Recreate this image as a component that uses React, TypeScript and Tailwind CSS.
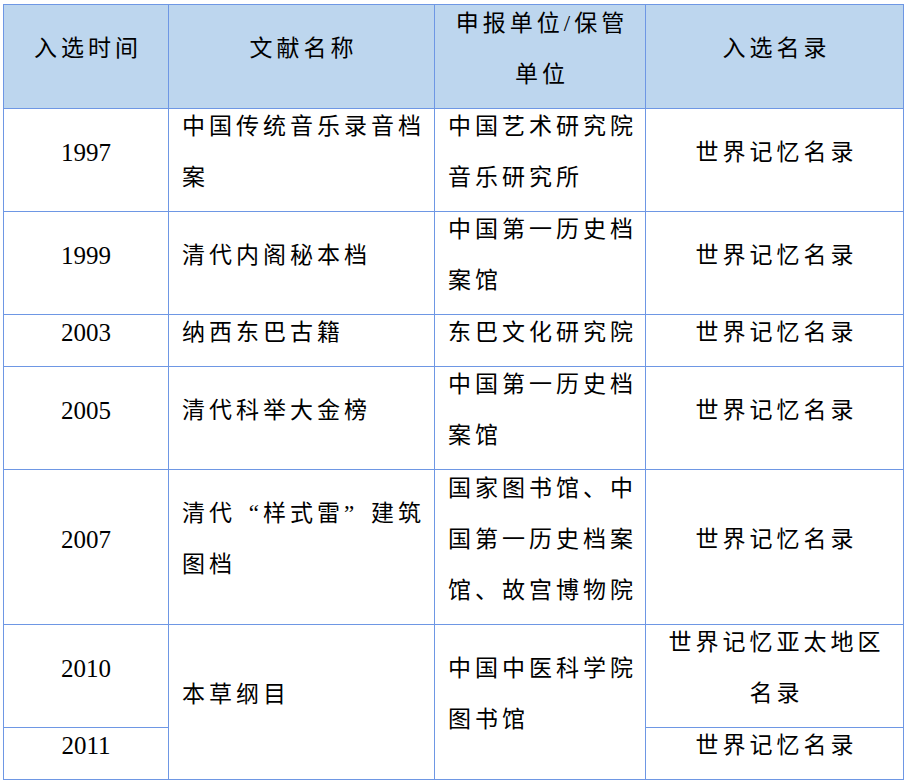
import React from "react";

const OpenQ = () => <span className="inline-block w-[27px] text-right">“</span>;
const CloseQ = () => <span className="inline-block w-[27px] text-left">”</span>;

const T = ({ children }: { children: React.ReactNode }) => (
  <span className="inline-block -translate-y-[8px]">{children}</span>
);

const cell = "border border-[#6e97e4] align-middle p-0";
const cjk = "[font-family:'Liberation_Serif','Noto_Sans_CJK_SC',serif] text-[23px] tracking-[4px] leading-[51px] text-black";
const num = "[font-family:'Liberation_Serif',serif] text-[25px] leading-[51px] text-black text-center";

const Year = ({ y }: { y: string }) => (
  <td className={`${cell} ${num}`}>
    <T>{y}</T>
  </td>
);

const Left = ({ lines, rowSpan }: { lines: React.ReactNode[]; rowSpan?: number }) => (
  <td rowSpan={rowSpan} className={`${cell} ${cjk} pl-[13px] text-left whitespace-nowrap`}>
    <T>
      {lines.map((l, i) => (
        <div key={i}>{l}</div>
      ))}
    </T>
  </td>
);

const Center = ({ lines }: { lines: React.ReactNode[] }) => (
  <td className={`${cell} ${cjk} text-center whitespace-nowrap`}>
    <T>
      {lines.map((l, i) => (
        <div key={i} className="pl-[4px]">{l}</div>
      ))}
    </T>
  </td>
);

export default function App() {
  return (
    <div className="bg-white w-[906px] h-[781px] pt-[4px] pl-[3px]">
      <table className="table-fixed border-collapse w-[900px]">
        <colgroup>
          <col className="w-[165px]" />
          <col className="w-[266px]" />
          <col className="w-[211px]" />
          <col className="w-[258px]" />
        </colgroup>
        <tbody>
          <tr className="h-[104px] bg-[#bdd6ee]">
            <Center lines={["入选时间"]} />
            <Center lines={["文献名称"]} />
            <Center lines={["申报单位/保管", "单位"]} />
            <Center lines={["入选名录"]} />
          </tr>
          <tr className="h-[103px]">
            <Year y="1997" />
            <Left lines={["中国传统音乐录音档", "案"]} />
            <Left lines={["中国艺术研究院", "音乐研究所"]} />
            <Center lines={["世界记忆名录"]} />
          </tr>
          <tr className="h-[103px]">
            <Year y="1999" />
            <Left lines={["清代内阁秘本档"]} />
            <Left lines={["中国第一历史档", "案馆"]} />
            <Center lines={["世界记忆名录"]} />
          </tr>
          <tr className="h-[52px]">
            <Year y="2003" />
            <Left lines={["纳西东巴古籍"]} />
            <Left lines={["东巴文化研究院"]} />
            <Center lines={["世界记忆名录"]} />
          </tr>
          <tr className="h-[103px]">
            <Year y="2005" />
            <Left lines={["清代科举大金榜"]} />
            <Left lines={["中国第一历史档", "案馆"]} />
            <Center lines={["世界记忆名录"]} />
          </tr>
          <tr className="h-[155px]">
            <Year y="2007" />
            <Left
              lines={[
                <>
                  清代<OpenQ />样式雷<CloseQ />建筑
                </>,
                "图档",
              ]}
            />
            <Left lines={["国家图书馆、中", "国第一历史档案", "馆、故宫博物院"]} />
            <Center lines={["世界记忆名录"]} />
          </tr>
          <tr className="h-[103px]">
            <Year y="2010" />
            <Left rowSpan={2} lines={["本草纲目"]} />
            <Left rowSpan={2} lines={["中国中医科学院", "图书馆"]} />
            <Center lines={["世界记忆亚太地区", "名录"]} />
          </tr>
          <tr className="h-[52px]">
            <Year y="2011" />
            <Center lines={["世界记忆名录"]} />
          </tr>
        </tbody>
      </table>
    </div>
  );
}
